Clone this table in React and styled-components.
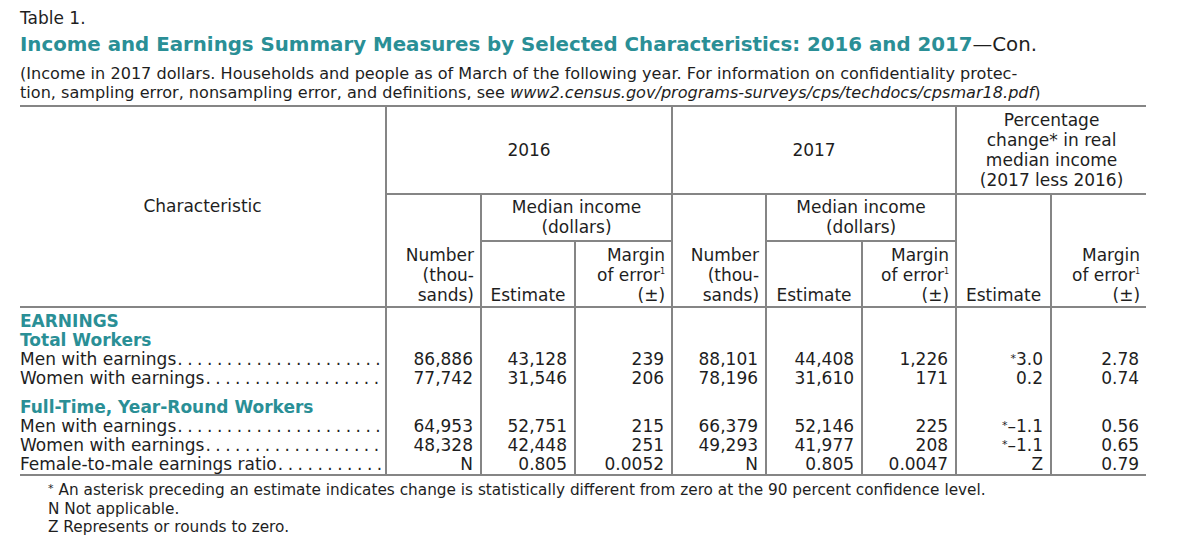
import React from 'react'
import styled, { createGlobalStyle } from 'styled-components'

const GlobalStyle = createGlobalStyle`
    html, body {
        margin: 0;
        padding: 0;
        background: #ffffff;
    }
    body {
        font-family: "DejaVu Sans", "Open Sans", sans-serif;
        color: #1e1e1e;
    }
`;

const TEAL = '#2a8f96';
const LINE = '2px solid #858585';

const Page = styled.div`
    width: 1200px;
    height: 535px;
    padding: 8px 0 0 20px;
    box-sizing: border-box;
    overflow: hidden;
`;

const TableNo = styled.div`
    font-size: 17px;
    line-height: 20px;
`;

const Title = styled.div`
    margin-top: 4px;
    font-size: 19.8px;
    line-height: 26px;
    font-weight: 700;
    color: ${TEAL};
    white-space: nowrap;
`;

const Con = styled.span`
    font-weight: 400;
    color: #1e1e1e;
`;

const Subtitle = styled.div`
    margin-top: 6px;
    font-size: 16.1px;
    line-height: 19px;
    white-space: nowrap;
`;

const Table = styled.table`
    margin-top: 3px;
    border-collapse: collapse;
    table-layout: fixed;
    width: 1126px;
    border-top: ${LINE};
    border-bottom: ${LINE};
    font-size: 17px;
`;

const Th = styled.th`
    font-weight: 400;
    line-height: 20px;
    padding: ${p => p.$pad || '0 6px 1px 6px'};
    text-align: ${p => p.$align || 'center'};
    vertical-align: ${p => p.$valign || 'middle'};
    height: ${p => p.$h ? `${p.$h}px` : 'auto'};
    border-left: ${p => p.$first ? 'none' : LINE};
    border-bottom: ${LINE};
    white-space: nowrap;
`;

const Td = styled.td`
    line-height: 19px;
    height: 19px;
    padding: ${p => p.$top ? `${p.$top}px` : '0'} 7px 0 0;
    text-align: right;
    vertical-align: bottom;
    border-left: ${LINE};
    white-space: nowrap;
`;

const LabelTd = styled.td`
    line-height: 19px;
    height: 19px;
    padding: ${p => p.$top ? `${p.$top}px` : '0'} 3px 0 0;
    vertical-align: bottom;
    white-space: nowrap;
    color: ${p => p.$group ? TEAL : 'inherit'};
    font-weight: ${p => p.$group ? 700 : 400};
`;

const Leader = styled.div`
    display: flex;
    overflow: hidden;
    height: 19px;
`;

const Dots = styled.span`
    flex: 1;
    overflow: hidden;
    white-space: nowrap;
    letter-spacing: 4.5px;
    padding-left: 1px;
    &::after {
        content: '..................................................';
    }
`;

const Sup = styled.sup`
    font-size: 8px;
    line-height: 0;
    vertical-align: 7px;
`;

const Footnotes = styled.div`
    padding: 5px 0 0 28px;
    font-size: 15.3px;
    line-height: 18.5px;
`;

const Star = styled.span`
    font-size: 11px;
    line-height: 0;
    vertical-align: 3px;
    margin-right: ${p => p.$gap ? '5px' : '0'};
`;

const rows = [
    { group: 'EARNINGS' },
    { group: 'Total Workers' },
    { label: 'Men with earnings', v: ['86,886', '43,128', '239', '88,101', '44,408', '1,226', '*3.0', '2.78'] },
    { label: 'Women with earnings', v: ['77,742', '31,546', '206', '78,196', '31,610', '171', '0.2', '0.74'] },
    { group: 'Full-Time, Year-Round Workers', top: 10 },
    { label: 'Men with earnings', v: ['64,953', '52,751', '215', '66,379', '52,146', '225', '*-1.1', '0.56'] },
    { label: 'Women with earnings', v: ['48,328', '42,448', '251', '49,293', '41,977', '208', '*-1.1', '0.65'] },
    { label: 'Female-to-male earnings ratio', v: ['N', '0.805', '0.0052', 'N', '0.805', '0.0047', 'Z', '0.79'] },
];

const widths = [366, 95, 94, 97, 94, 96, 94, 95, 95];

function Value({ text }) {
    if (text.startsWith('*')) {
        return <span><Star>*</Star>{text.slice(1).replace('-', '\u2013')}</span>
    }
    return text
}

function MarginHead() {
    return <>Margin<br />of error<Sup>1</Sup><br />(±)</>
}

export default function App() {
    return (
        <Page>
            <GlobalStyle />
            <TableNo>Table 1.</TableNo>
            <Title>Income and Earnings Summary Measures by Selected Characteristics: 2016 and 2017<Con>—Con.</Con></Title>
            <Subtitle>
                (Income in 2017 dollars. Households and people as of March of the following year. For information on confidentiality protec-<br />
                tion, sampling error, nonsampling error, and definitions, see <i>www2.census.gov/programs-surveys/cps/techdocs/cpsmar18.pdf</i>)
            </Subtitle>
            <Table>
                <colgroup>
                    {widths.map((w, i) => <col key={i} style={{ width: w }} />)}
                </colgroup>
                <thead>
                    <tr>
                        <Th rowSpan={3} $first>Characteristic</Th>
                        <Th colSpan={3} $h={85}>2016</Th>
                        <Th colSpan={3}>2017</Th>
                        <Th colSpan={2}>Percentage<br />change* in real<br />median income<br />(2017 less 2016)</Th>
                    </tr>
                    <tr>
                        <Th rowSpan={2} $align="right" $valign="bottom">Number<br />(thou-<br />sands)</Th>
                        <Th colSpan={2} $h={39} $pad="2px 6px 3px 6px">Median income<br />(dollars)</Th>
                        <Th rowSpan={2} $align="right" $valign="bottom">Number<br />(thou-<br />sands)</Th>
                        <Th colSpan={2} $pad="2px 6px 3px 6px">Median income<br />(dollars)</Th>
                        <Th rowSpan={2} $valign="bottom">Estimate</Th>
                        <Th rowSpan={2} $align="right" $valign="bottom"><MarginHead /></Th>
                    </tr>
                    <tr>
                        <Th $valign="bottom" $h={63}>Estimate</Th>
                        <Th $align="right" $valign="bottom"><MarginHead /></Th>
                        <Th $valign="bottom">Estimate</Th>
                        <Th $align="right" $valign="bottom"><MarginHead /></Th>
                    </tr>
                </thead>
                <tbody>
                    {rows.map((row, i) => {
                        const top = i === 0 ? 4 : row.top
                        return (
                            <tr key={i}>
                                {row.group
                                    ? <LabelTd $group $top={top}>{row.group}</LabelTd>
                                    : <LabelTd $top={top}><Leader><span>{row.label}</span><Dots /></Leader></LabelTd>
                                }
                                {(row.v || Array(8).fill('')).map((v, j) => (
                                    <Td key={j} $top={top}><Value text={v} /></Td>
                                ))}
                            </tr>
                        )
                    })}
                </tbody>
            </Table>
            <Footnotes>
                <div><Star $gap>*</Star>An asterisk preceding an estimate indicates change is statistically different from zero at the 90 percent confidence level.</div>
                <div>N Not applicable.</div>
                <div>Z Represents or rounds to zero.</div>
            </Footnotes>
        </Page>
    )
}
